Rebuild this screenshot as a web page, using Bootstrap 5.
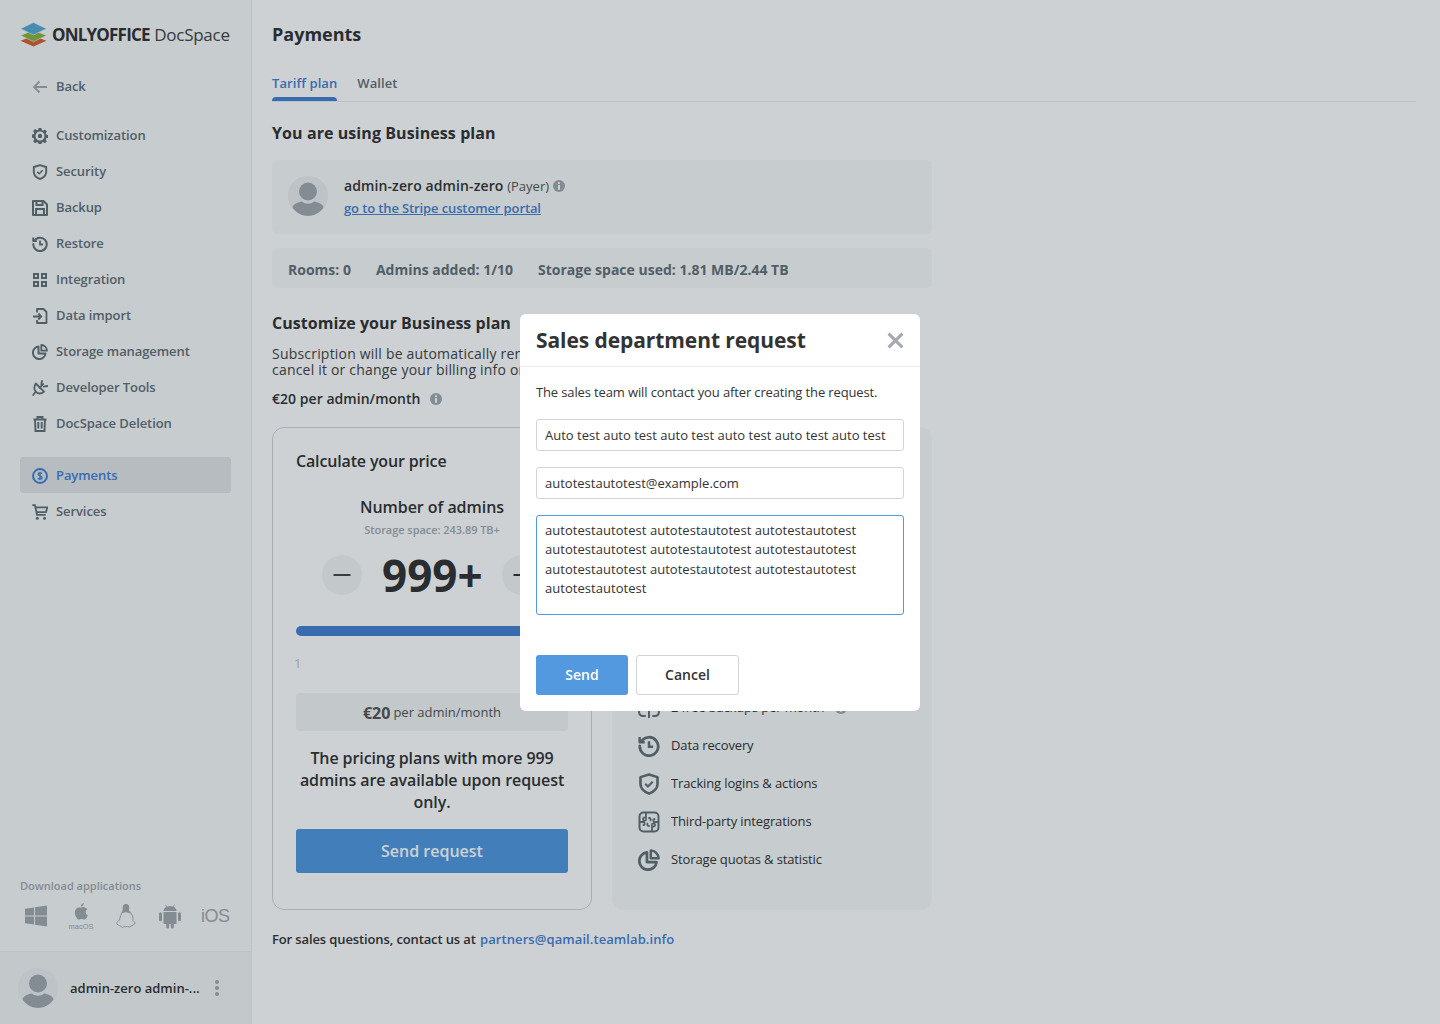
<!DOCTYPE html>
<html lang="en">
<head>
<meta charset="utf-8">
<title>Payments</title>
<link href="https://cdn.jsdelivr.net/npm/bootstrap@5.3.0/dist/css/bootstrap.min.css" rel="stylesheet">
<style>
html,body{height:100%}
body{font-family:"Open Sans","Liberation Sans",sans-serif;color:#333;background:#fff;font-size:13px;overflow:hidden}
.shell{height:1024px}
.side{width:252px;flex:none;background:#f8f9f9;border-right:1px solid #eceef1}
.brand{height:69px;padding:21px 20px 0}
.brand svg{flex:none}
.brandname{font-size:17px;line-height:28px;margin-left:5px;color:#333;white-space:nowrap}
.brandname b{font-weight:700;letter-spacing:-.8px}
.brandname span{font-weight:400;color:#444;letter-spacing:-.25px}
.navrow{height:36px;margin:0 20px;padding-left:12px;display:flex;align-items:center;gap:8px;color:#657077;font-weight:600;font-size:13px;letter-spacing:-.08px;text-decoration:none;border-radius:3px}
.navrow svg{width:16px;height:16px;flex:none;color:#657077}
.navrow.active-row{background:#e3e5e7;color:#4781d1;padding-top:1px;margin-bottom:1px}
.navrow.active-row svg{color:#4781d1}
.back-row{margin-bottom:13px}
.group-gap{margin-top:15px}
.downloads{padding:0 20px 22px;margin-top:auto}
.dl-title{font-size:11px;font-weight:600;color:#a3a9ae;line-height:16px;margin-bottom:9px}
.dl-icons{height:26px;padding-left:5px;gap:20px;color:#a3a9ae}
.droid{margin-left:2px}
.ios{font-family:"Liberation Sans",sans-serif;font-size:18px;letter-spacing:-.5px;color:#a3a9ae;line-height:26px}
.user-foot{height:73px;padding:0 18px;border-top:1px solid #eceef1;background:#f3f4f4;gap:12px}
.user-foot .uname{font-weight:600;font-size:13px;color:#333;width:132px;white-space:nowrap;padding-top:1px}
.dots{width:5px;gap:2px;align-items:center}
.dots i{display:block;width:4px;height:4px;border-radius:50%;background:#a3a9ae}
.avatar{border-radius:50%;background:#eceef1;flex:none;display:block}
.page{padding:0 24px 0 20px;min-width:0}
.page-title{font-size:18px;font-weight:700;line-height:28px;margin:20px 0 21px;color:#333}
.tabline{height:33px;border-bottom:1px solid #eceef1;gap:20px;font-weight:600;font-size:13px;letter-spacing:.08px;color:#657077}
.tabitem{line-height:18px;padding-top:5px;height:32px;color:#657077;position:relative}
.tabitem.on{color:#4781d1}
.tabitem.on::after{content:"";position:absolute;left:0;right:0;bottom:0;height:4px;background:#4781d1;border-radius:4px 4px 0 0}
.h-plan{font-size:16px;font-weight:700;line-height:22px;color:#333;margin:20px 0 16px;letter-spacing:.08px}
.panel{width:660px;background:#f8f9f9;border-radius:6px}
.payer{height:74px;padding:16px;gap:16px}
.payer .who{font-size:14px;font-weight:600;line-height:20px;color:#333;letter-spacing:.1px}
.payer .who small{font-size:13px;font-weight:400;color:#555;letter-spacing:0}
.payer a{font-size:13px;font-weight:600;color:#4781d1;line-height:20px;display:block;margin-top:2px;letter-spacing:-.12px}
.info{width:12px;height:12px;vertical-align:-1px;color:#a3a9ae}
.stats{height:40px;margin-top:14px;padding:2px 16px 0;gap:25px;font-size:14px;font-weight:700;color:#657077;align-items:center}
.h-cust{font-size:16px;font-weight:700;line-height:22px;color:#333;margin:24px 0 12px;letter-spacing:.04px}
.sub-text{font-size:14px;line-height:16px;color:#444;white-space:nowrap;letter-spacing:.2px}
.rate{font-size:14px;font-weight:600;line-height:20px;color:#333;margin:11px 0 18px;letter-spacing:.04px}
.rate svg{margin-left:6px}
.plans{width:660px;gap:20px;height:483px}
.calc{width:320px;flex:none;border:1px solid #d0d5da;border-radius:12px;padding:22px 23px}
.calc-title{font-size:16px;font-weight:600;line-height:22px;color:#333;letter-spacing:-.15px}
.calc-label{font-size:16px;font-weight:600;line-height:22px;text-align:center;color:#333;margin-top:24px;letter-spacing:-.05px}
.calc-sub{font-size:11px;font-weight:600;color:#a3a9ae;line-height:16px;text-align:center;margin-top:4px;letter-spacing:-.05px}
.counter{margin-top:12px;height:50px;gap:20px}
.round{width:40px;height:40px;border-radius:50%;background:#f3f4f4;flex:none;color:#333}
.round svg{width:40px;height:40px;display:block}
.count{font-size:44px;font-weight:700;line-height:50px;color:#333;width:100px;text-align:center}
.slide{height:10px;border-radius:5px;background:#4781d1;margin-top:26px}
.slide-labels{font-size:13px;color:#c2c6ca;line-height:16px;margin-top:19px;margin-left:-2px;height:16px}
.price{height:38px;padding-top:2px;margin-top:22px;background:#f3f4f4;border-radius:3px;font-size:13px;color:#555;gap:3px}
.price b{font-size:16px;font-weight:700;color:#555}
.note{font-size:16px;font-weight:600;line-height:22px;text-align:center;color:#333;margin:16px 0;letter-spacing:-.1px}
.send-big{height:44px;border-radius:3px;background:#5299e0;color:#fff;font-size:16px;font-weight:600;border:0;width:100%}
.feats{width:320px;flex:none;background:#f8f9f9;border-radius:12px;padding:0 26px 31px}
.feat{height:38px;gap:11px;font-size:13px;color:#333;letter-spacing:-.13px}
.feat svg{width:22px;height:22px;flex:none;color:#657077}
.feat svg.info{width:12px;height:12px;color:#a3a9ae}
.contact{font-size:13px;font-weight:600;line-height:20px;margin-top:19px;color:#333;letter-spacing:-.12px}
.contact a{color:#4781d1;text-decoration:none;letter-spacing:.08px;margin-left:1px}
.veil{position:fixed;inset:0;background:rgba(5,25,35,.2);backdrop-filter:blur(.7px);z-index:10}
.dlg{width:400px;height:397px;background:#fff;border-radius:6px;border:0;margin:0}
.dlg-head{height:53px;padding:0 16px;border-bottom:1px solid #eceef1}
.dlg-head h5{font-size:21px;font-weight:700;color:#333;margin:0;line-height:28px;letter-spacing:-.08px}
.dlg-x{width:17px;height:17px;color:#a3a9ae;margin-top:2px}
.dlg-body{padding:15px 16px 0}
.dlg-body p{font-size:13px;line-height:20px;margin:0 0 17px;color:#333;letter-spacing:-.13px}
.fld{font-family:inherit;font-size:13px;height:32px;padding:5px 8px;border:1px solid #d0d5da;border-radius:3px;color:#333;margin-bottom:16px;background:#fff;line-height:20px}
.fld.area{height:100px;border-color:#5299e0;line-height:19.500px;resize:none;overflow:hidden;padding:5px 8px;margin-bottom:40px;letter-spacing:.04px}
.btn-send{width:92px;height:40px;background:#5299e0;color:#fff;border:0;border-radius:3px;font-size:14px;font-weight:600;padding:0}
.btn-cancel{width:103px;height:40px;background:#fff;color:#333;border:1px solid #d0d5da;border-radius:3px;font-size:14px;font-weight:600;padding:0}
</style>
</head>
<body>
<svg width="0" height="0" class="position-absolute">
<defs>
<symbol id="i-gear" viewBox="0 0 16 16"><path fill-rule="evenodd" d="M6.600 0h2.800l.4 2.100 1.300.6 1.800-1.200 2 2-1.200 1.800.6 1.300 2.100.4v2.800l-2.100.4-.6 1.300 1.200 1.800-2 2-1.800-1.200-1.300.6-.4 2.100H6.600l-.4-2.100-1.300-.6-1.800 1.200-2-2 1.200-1.800-.6-1.300L-.400 9.400V6.600l2.100-.4.600-1.300-1.200-1.800 2-2 1.800 1.200 1.300-.6zM8 3.500a4.500 4.500 0 1 0 0 9 4.500 4.500 0 0 0 0-9z" fill="currentColor"/><circle cx="8" cy="8" r="2.200" fill="currentColor"/></symbol>
<symbol id="i-shield" viewBox="0 0 16 16"><path d="M8 1.100 14.200 3v5c0 3.300-2.900 5.700-6.200 7C4.700 13.700 1.800 11.300 1.800 8V3z" fill="none" stroke="currentColor" stroke-width="1.900" stroke-linejoin="round"/><path d="M5.200 7.900 7.200 9.800l3.500-3.500" fill="none" stroke="currentColor" stroke-width="1.500"/></symbol>
<symbol id="i-save" viewBox="0 0 16 16"><path d="M1 1h10.500L15 4.500V15H1z" fill="none" stroke="currentColor" stroke-width="2" stroke-linejoin="round"/><path d="M4.500 1v4h6V1M4 15V9h8v6" fill="none" stroke="currentColor" stroke-width="2"/></symbol>
<symbol id="i-restore" viewBox="0 0 16 16"><path d="M2.300 4.800A6.700 6.700 0 1 1 1.300 8" fill="none" stroke="currentColor" stroke-width="2" stroke-linecap="round"/><path d="M1.200 1.500v3.700h3.700" fill="none" stroke="currentColor" stroke-width="1.800" stroke-linejoin="round"/><path d="M8 4.500V8.500h3" fill="none" stroke="currentColor" stroke-width="1.800"/></symbol>
<symbol id="i-grid" viewBox="0 0 16 16"><path d="M2 2h4v4H2zM10 2h4v4h-4zM2 10h4v4H2zM10 10h4v4h-4z" fill="none" stroke="currentColor" stroke-width="2"/></symbol>
<symbol id="i-import" viewBox="0 0 16 16"><path d="M5 4.500V1h6.500L14.500 4v11H5v-3" fill="none" stroke="currentColor" stroke-width="1.800" stroke-linejoin="round"/><path d="M1 8.500h8M6.300 5.500l3 3-3 3" fill="none" stroke="currentColor" stroke-width="1.800"/></symbol>
<symbol id="i-pie" viewBox="0 0 16 16"><path d="M6.500 2.500a6.300 6.300 0 1 0 7 7H6.500z" fill="none" stroke="currentColor" stroke-width="2" stroke-linejoin="round"/><path d="M9.300 1v5.700H15A6 6 0 0 0 9.300 1z" fill="none" stroke="currentColor" stroke-width="1.800" stroke-linejoin="round"/></symbol>
<symbol id="i-dev" viewBox="0 0 16 16"><path d="M3.800 3.500 12 11.700C9 14 5.800 13.600 4 11.800 2.200 9.800 1.800 6.500 3.800 3.500z" fill="none" stroke="currentColor" stroke-width="1.800" stroke-linejoin="round"/><path d="M7.500 7.800 11.200 4.100M10 1l-.7 3.500M15.500 6l-3.700.6M3.500 12 1.200 15" fill="none" stroke="currentColor" stroke-width="1.800" stroke-linecap="round"/></symbol>
<symbol id="i-trash" viewBox="0 0 16 16"><path d="M1.500 3.500h13M5.500 3V1h5v2M3 3.500l.5 11.500h9L13 3.500M6.300 6v6.500M9.700 6v6.500" fill="none" stroke="currentColor" stroke-width="1.900"/></symbol>
<symbol id="i-pay" viewBox="0 0 16 16"><circle cx="8" cy="8" r="7" fill="none" stroke="currentColor" stroke-width="1.900"/><path d="M10 5.700C9.600 5 8.800 4.800 8 4.800c-1 0-2 .5-2 1.500 0 2.200 4.100 1 4.100 3.300 0 1.100-1 1.600-2.100 1.600-.9 0-1.700-.4-2.100-1.100M8 3.800v8.400" fill="none" stroke="currentColor" stroke-width="1.300"/></symbol>
<symbol id="i-cart" viewBox="0 0 16 16"><path d="M.3 1.200H3L5 10.800h8.700M3.500 3.300H15.300l-1.300 4.900H4.500" fill="none" stroke="currentColor" stroke-width="1.800"/><circle cx="5.300" cy="14.300" r="1.500" fill="currentColor"/><circle cx="12.500" cy="14.300" r="1.500" fill="currentColor"/></symbol>
<symbol id="i-info" viewBox="0 0 12 12"><circle cx="6" cy="6" r="6" fill="currentColor"/><path d="M5 2.300h2v1.700H5zM5 5h2v4.700H5z" fill="#fff"/></symbol>
<symbol id="i-cloud" viewBox="0 0 22 22"><path d="M7 19H5a4 4 0 0 1-.8-7.900 7 7 0 0 1 13.600 0A4 4 0 0 1 17 19h-2" fill="none" stroke="currentColor" stroke-width="2" stroke-linecap="round"/><path d="M11 10v11" fill="none" stroke="currentColor" stroke-width="2"/></symbol>
<symbol id="i-puzzle" viewBox="0 0 22 22"><rect x="1.500" y="1.500" width="19" height="19" rx="4" fill="none" stroke="currentColor" stroke-width="2"/><path d="M8 2v5c-1.500-1-3-.5-3 1s1.500 2 3 1M2 11h4c1 1.500 1 3-.5 3M20 11h-4c-1-1.500-1-3 .5-3M14 20v-5c1.500 1 3 .5 3-1s-1.500-2-3-1M11 7c1.500 0 2 1 1.500 2.500M11 15c-1.500 0-2-1-1.500-2.500" fill="none" stroke="currentColor" stroke-width="1.800" stroke-linecap="round"/></symbol>
<symbol id="i-person" viewBox="0 0 40 40"><circle cx="20" cy="20" r="20" fill="#eceef1"/><circle cx="20" cy="15.500" r="9" fill="#a3a9ae"/><path d="M4.500 31.500C5 28 10 26 14 25.500c3 3 9 3 12 0 4 .5 9 2.500 9.500 6C32 36.500 26 40 20 40S8 36.500 4.500 31.500z" fill="#a3a9ae"/></symbol>
</defs>
</svg>

<div class="shell d-flex">
  <aside class="side d-flex flex-column">
    <div class="brand d-flex align-items-start">
      <svg width="27" height="26" viewBox="0 0 28 26">
        <path d="M14 15 27.500 20 14 26 .5 20z" fill="#d9603a"/>
        <path d="M14 9 27.500 14.500 14 21 .5 14.500z" fill="#8bb53c" stroke="#f8f9f9" stroke-width=".6"/>
        <path d="M14 1 27.500 7.500 14 14 .5 7.500z" fill="#5aa9d6" stroke="#f8f9f9" stroke-width=".6"/>
      </svg>
      <div class="brandname"><b>ONLYOFFICE</b> <span>DocSpace</span></div>
    </div>
    <a class="navrow back-row" href="#"><svg viewBox="0 0 16 16"><path d="M15 8H2M7.500 2.500 2 8l5.500 5.500" fill="none" stroke="#a3a9ae" stroke-width="1.800"/></svg>Back</a>
    <a class="navrow" href="#"><svg><use href="#i-gear"/></svg>Customization</a>
    <a class="navrow" href="#"><svg><use href="#i-shield"/></svg>Security</a>
    <a class="navrow" href="#"><svg><use href="#i-save"/></svg>Backup</a>
    <a class="navrow" href="#"><svg><use href="#i-restore"/></svg>Restore</a>
    <a class="navrow" href="#"><svg><use href="#i-grid"/></svg>Integration</a>
    <a class="navrow" href="#"><svg><use href="#i-import"/></svg>Data import</a>
    <a class="navrow" href="#"><svg><use href="#i-pie"/></svg>Storage management</a>
    <a class="navrow" href="#"><svg><use href="#i-dev"/></svg>Developer Tools</a>
    <a class="navrow" href="#"><svg><use href="#i-trash"/></svg>DocSpace Deletion</a>
    <a class="navrow active-row group-gap" href="#"><svg><use href="#i-pay"/></svg>Payments</a>
    <a class="navrow" href="#"><svg><use href="#i-cart"/></svg>Services</a>

    <div class="downloads">
      <div class="dl-title">Download applications</div>
      <div class="dl-icons d-flex align-items-center">
        <svg width="22" height="22" viewBox="0 0 23 22"><path d="M0 3.300 9.500 2v8.500H0zM10.500 1.800 23 0v10.500H10.500zM0 11.500h9.500V20L0 18.700zM10.500 11.500H23V22l-12.500-1.800z" fill="currentColor"/></svg>
        <svg width="28" height="26" viewBox="0 0 28 26"><path d="M14 4.500c1.500-.8 2.500-.8 4 0 1 .4 1.800 1 2.300 1.800-2.400 1.500-2.100 4.800.5 6-.8 2.200-2 4.400-3.300 4.400-1 0-1.500-.6-2.800-.6s-1.900.6-2.800.6c-1.800 0-4-4-4-7.200 0-3.400 2.500-5 4.300-5 1 0 1.800.4 1.800 0zM16.900 0c.1 1.800-1.300 3.600-3 3.600C13.700 1.800 15.300.2 16.900 0z" fill="currentColor"/><text x="14" y="25.500" text-anchor="middle" font-family="Liberation Sans" font-size="7.500" fill="currentColor">macOS</text></svg>
        <svg width="22" height="26" viewBox="0 0 24 27"><path d="M5 18c-1.500 1-3.500 2-3 4 1.500 2 4.500 2 6 4 1-1 5-1.500 8-.5 1.500-1.500 6-2.500 6-4.500 0-1-2-1.500-2.500-2.500 1-3-1-7-3.500-10-2-2-8-2-8 0C7 12 5 15 5 18z" fill="none" stroke="currentColor" stroke-width="1"/><path d="M12 .5c-3 0-3.800 2.500-3.500 5 .2 2-.5 4-2.500 6.500 1.500-1.500 3-2.500 5.800-2.500s4.200 1 6 3c-2-3-2.800-4.500-2.500-7C16 3 15 .5 12 .5z" fill="currentColor"/></svg>
        <svg class="droid" width="22" height="25" viewBox="0 0 22 25"><path d="M4.500 8h13v12h-2.700v3a1.500 1.500 0 0 1-3 0v-3h-1.600v3a1.500 1.500 0 0 1-3 0v-3H4.500zM1.500 8.200A1.500 1.500 0 0 1 3 9.700v6a1.500 1.500 0 0 1-3 0v-6a1.500 1.500 0 0 1 1.500-1.500zM20.500 8.200A1.500 1.500 0 0 1 22 9.700v6a1.500 1.500 0 0 1-3 0v-6a1.500 1.500 0 0 1 1.500-1.500zM4.500 7c.2-2 1.300-3.400 2.800-4.200L6.200.7l.6-.3L8 2.500a8 8 0 0 1 6 0L15.200.4l.6.3-1.100 2.100c1.500.8 2.600 2.200 2.800 4.200z" fill="currentColor"/></svg>
        <span class="ios">iOS</span>
      </div>
    </div>
    <div class="user-foot d-flex align-items-center">
      <svg class="avatar" width="40" height="40"><use href="#i-person"/></svg>
      <div class="uname">admin-zero admin-...</div>
      <div class="dots d-flex flex-column"><i></i><i></i><i></i></div>
    </div>
  </aside>

  <main class="page flex-grow-1">
    <div class="page-title">Payments</div>
    <div class="tabline d-flex">
      <div class="tabitem on">Tariff plan</div>
      <div class="tabitem">Wallet</div>
    </div>
    <div class="h-plan">You are using Business plan</div>
    <div class="panel payer d-flex">
      <svg class="avatar" width="40" height="40"><use href="#i-person"/></svg>
      <div>
        <div class="who">admin-zero admin-zero <small>(Payer)</small> <svg class="info"><use href="#i-info"/></svg></div>
        <a href="#">go to the Stripe customer portal</a>
      </div>
    </div>
    <div class="panel stats d-flex">
      <span>Rooms: 0</span><span>Admins added: 1/10</span><span>Storage space used: 1.81 MB/2.44 TB</span>
    </div>
    <div class="h-cust">Customize your Business plan</div>
    <div class="sub-text">Subscription will be automatically renewed on the same date.<br>cancel it or change your billing info on the Stripe customer portal.</div>
    <div class="rate">€20 per admin/month <svg class="info"><use href="#i-info"/></svg></div>

    <div class="plans d-flex">
      <section class="calc">
        <div class="calc-title">Calculate your price</div>
        <div class="calc-label">Number of admins</div>
        <div class="calc-sub">Storage space: 243.89 TB+</div>
        <div class="counter d-flex align-items-center justify-content-center">
          <div class="round"><svg viewBox="0 0 40 40"><path d="M11.500 20h17" stroke="#333" stroke-width="1.800"/></svg></div>
          <div class="count">999+</div>
          <div class="round"><svg viewBox="0 0 40 40"><path d="M11.500 20h17M20 11.500v17" stroke="#333" stroke-width="1.800"/></svg></div>
        </div>
        <div class="slide"></div>
        <div class="slide-labels d-flex justify-content-between"><span>1</span><span>999+</span></div>
        <div class="price d-flex align-items-center justify-content-center"><b>€20</b> per admin/month</div>
        <div class="note">The pricing plans with more 999 admins are available upon request only.</div>
        <button class="btn send-big" type="button">Send request</button>
      </section>
      <section class="feats d-flex flex-column justify-content-end">
        <div class="feat d-flex align-items-center"><svg><use href="#i-cloud"/></svg>2 free backups per month <svg class="info"><use href="#i-info"/></svg></div>
        <div class="feat d-flex align-items-center"><svg><use href="#i-restore"/></svg>Data recovery</div>
        <div class="feat d-flex align-items-center"><svg><use href="#i-shield"/></svg>Tracking logins &amp; actions</div>
        <div class="feat d-flex align-items-center"><svg><use href="#i-puzzle"/></svg>Third-party integrations</div>
        <div class="feat d-flex align-items-center"><svg><use href="#i-pie"/></svg>Storage quotas &amp; statistic</div>
      </section>
    </div>
    <div class="contact">For sales questions, contact us at <a href="#">partners@qamail.teamlab.info</a></div>
  </main>
</div>

<div class="veil d-flex align-items-center justify-content-center">
  <div class="dlg d-flex flex-column">
    <div class="dlg-head d-flex align-items-center justify-content-between">
      <h5>Sales department request</h5>
      <svg class="dlg-x" viewBox="0 0 16 16"><path d="M1.500 1.500l13 13M14.500 1.500l-13 13" stroke="currentColor" stroke-width="2.800" fill="none"/></svg>
    </div>
    <div class="dlg-body">
      <p>The sales team will contact you after creating the request.</p>
      <input class="form-control fld" type="text" value="Auto test auto test auto test auto test auto test auto test">
      <input class="form-control fld" type="email" value="autotestautotest@example.com">
      <textarea class="form-control fld area">autotestautotest autotestautotest autotestautotest autotestautotest autotestautotest autotestautotest autotestautotest autotestautotest autotestautotest autotestautotest</textarea>
      <div class="d-flex gap-2">
        <button class="btn btn-send" type="button">Send</button>
        <button class="btn btn-cancel" type="button">Cancel</button>
      </div>
    </div>
  </div>
</div>
<script src="https://cdn.jsdelivr.net/npm/bootstrap@5.3.0/dist/js/bootstrap.bundle.min.js"></script>
</body>
</html>
